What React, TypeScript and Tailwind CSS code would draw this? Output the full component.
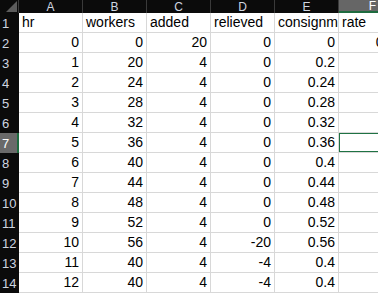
const cols = ['A', 'B', 'C', 'D', 'E', 'F'];

const header = ['hr', 'workers', 'added', 'relieved', 'consignment', 'rate'];

const rows: (number | string)[][] = [
  [0, 0, 20, 0, 0, '0.02'],
  [1, 20, 4, 0, 0.2, ''],
  [2, 24, 4, 0, 0.24, ''],
  [3, 28, 4, 0, 0.28, ''],
  [4, 32, 4, 0, 0.32, ''],
  [5, 36, 4, 0, 0.36, ''],
  [6, 40, 4, 0, 0.4, ''],
  [7, 44, 4, 0, 0.44, ''],
  [8, 48, 4, 0, 0.48, ''],
  [9, 52, 4, 0, 0.52, ''],
  [10, 56, 4, -20, 0.56, ''],
  [11, 40, 4, -4, 0.4, ''],
  [12, 40, 4, -4, 0.4, ''],
];

const SEL_ROW = 7;
const SEL_COL = 'F';

function RowHead({ n }: { n: number }) {
  const sel = n === SEL_ROW;
  return (
    <div
      className={
        'h-5 flex items-center pl-[2px] text-[13px] leading-none ' +
        (sel ? 'bg-[#6a6a6a] text-white border-r-2 border-[#1e6b3f]' : 'bg-[#0b0b0b] text-[#cfd6e0]')
      }
    >
      {n}
    </div>
  );
}

export default function App() {
  return (
    <div
      className="w-[378px] h-[296px] overflow-hidden bg-white"
      style={{ fontFamily: '"Liberation Sans", Arial, sans-serif' }}
    >
      <div className="grid grid-cols-[19px_64px_64px_64px_64px_64px_68px] grid-rows-[13px] auto-rows-[20px] w-max">
        {/* corner */}
        <div className="bg-[#0b0b0b] border-r border-[#3a3a3a] flex items-end justify-end pr-[1px] pb-[1px]">
          <svg width="11" height="11" viewBox="0 0 11 11">
            <path d="M11 0 L11 11 L0 11 Z" fill="#5c5c5c" />
          </svg>
        </div>
        {cols.map((c) => (
          <div
            key={c}
            className={
              'flex items-center justify-center text-[12px] leading-none border-r ' +
              (c === SEL_COL
                ? 'bg-[#666] text-white border-[#666] border-b-2 border-b-[#1e6b3f]'
                : 'bg-[#0b0b0b] text-[#cfd6e0] border-[#3a3a3a]')
            }
          >
            {c}
          </div>
        ))}

        {/* row 1 */}
        <RowHead n={1} />
        {header.map((h, i) => (
          <div
            key={i}
            className="border-r border-b border-[#d8d8d8] overflow-hidden whitespace-nowrap pl-[3px] text-[14px] text-black flex items-center"
          >
            {h}
          </div>
        ))}

        {rows.map((r, ri) => {
          const n = ri + 2;
          return [
            <RowHead key={'h' + n} n={n} />,
            ...r.map((v, ci) => {
              const sel = n === SEL_ROW && cols[ci] === SEL_COL;
              return (
                <div
                  key={n + '-' + ci}
                  className="relative border-r border-b border-[#d8d8d8] overflow-hidden whitespace-nowrap pr-[3px] text-[14px] text-black flex items-center justify-end"
                >
                  {v}
                  {sel && <span className="absolute -left-px -top-px right-0 -bottom-px border-2 border-[#1f7244]" />}
                </div>
              );
            }),
          ];
        })}
      </div>
    </div>
  );
}
